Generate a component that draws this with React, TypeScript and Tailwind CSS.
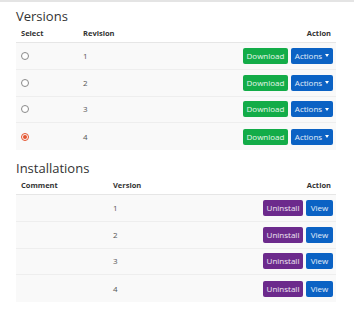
import React from 'react';

const font = { fontFamily: '"Open Sans", "Noto Sans", sans-serif' };

const Radio = ({ checked }: { checked?: boolean }) =>
  checked ? (
    <span className="flex h-[8px] w-[8px] items-center justify-center rounded-full border border-[#e5532d]">
      <span className="h-[4px] w-[4px] rounded-full bg-[#e5532d]" />
    </span>
  ) : (
    <span className="h-[8px] w-[8px] rounded-full border border-[#8a8a8a] bg-white" />
  );

const Btn = ({ color, w, children }: { color: string; w: string; children: React.ReactNode }) => (
  <button className={`flex h-[16px] items-center justify-center rounded-[2px] text-[8px] leading-none text-white/90 ${color} ${w}`}>
    {children}
  </button>
);

export default function App() {
  const rows = [1, 2, 3, 4];
  return (
    <div className="h-[322px] w-[354px] border-t-2 border-[#e4e4e4] bg-white text-[#333]" style={font}>
      <div className="px-4 pt-[4px]">
        <h2 className="text-[13px] leading-[20px] text-[#333]">Versions</h2>
        <div className="w-[320px]">
          <div className="grid h-[17px] grid-cols-[62px_1fr_auto] items-center border-b border-[#e6e6e6] px-[5px] text-[7.5px] font-bold">
            <span>Select</span>
            <span>Revision</span>
            <span>Action</span>
          </div>
          {rows.map((r) => (
            <div
              key={r}
              className="grid h-[26.75px] grid-cols-[62px_1fr_auto] items-center border-b border-[#eeeeee] bg-[#f9f9f9] pl-[5px] pr-[3px] text-[8px] last:border-b-0"
            >
              <span className="flex items-center">
                <Radio checked={r === 4} />
              </span>
              <span className="text-[#555]">{r}</span>
              <span className="flex gap-[3px]">
                <Btn color="bg-[#13ac48]" w="w-[45px]">Download</Btn>
                <Btn color="bg-[#0b62c4]" w="w-[42px]">
                  Actions
                  <span className="ml-[3px] border-x-[2.5px] border-t-[3px] border-x-transparent border-t-white" />
                </Btn>
              </span>
            </div>
          ))}
        </div>

        <h2 className="mt-[8px] text-[13px] leading-[20px] text-[#333]">Installations</h2>
        <div className="w-[320px]">
          <div className="grid h-[17px] grid-cols-[92px_1fr_auto] items-center border-b border-[#e6e6e6] px-[5px] text-[7.5px] font-bold">
            <span>Comment</span>
            <span>Version</span>
            <span>Action</span>
          </div>
          {rows.map((r) => (
            <div
              key={r}
              className="grid h-[26.75px] grid-cols-[92px_1fr_auto] items-center border-b border-[#eeeeee] bg-[#f9f9f9] pl-[5px] pr-[3px] text-[8px] last:border-b-0"
            >
              <span />
              <span className="text-[#555]">{r}</span>
              <span className="flex gap-[3px]">
                <Btn color="bg-[#6c2a8c]" w="w-[40px]">Uninstall</Btn>
                <Btn color="bg-[#0b62c4]" w="w-[27px]">View</Btn>
              </span>
            </div>
          ))}
        </div>
      </div>
    </div>
  );
}
